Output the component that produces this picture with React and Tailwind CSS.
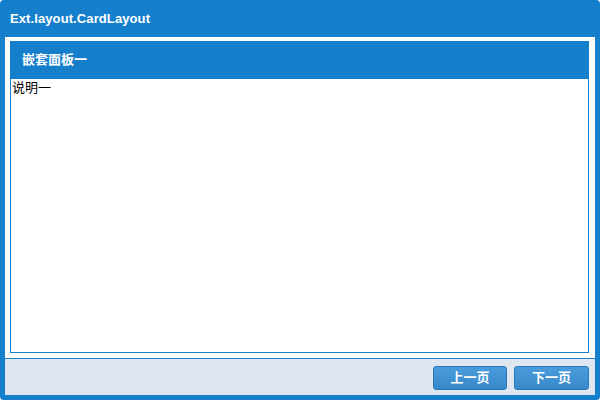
export default function App() {
  const font = { fontFamily: '"Liberation Sans", "Noto Sans CJK SC", sans-serif' };
  return (
    <div className="w-[601px] h-[401px] bg-white" style={font}>
      <div className="w-[600px] h-[400px] bg-[#157fcc] rounded-[4px] flex flex-col px-[5px] pb-[5px]">
        <div className="h-[37px] flex items-center pl-[5px] text-white font-bold text-[13px] tracking-[0.1px] shrink-0">
          Ext.layout.CardLayout
        </div>
        <div className="flex-1 bg-white flex flex-col pt-[4px] pl-[5px] pr-[6px] pb-[5px] min-h-0">
          <div className="flex-1 flex flex-col min-h-0">
            <div className="h-[38px] bg-[#157fcc] flex items-center pl-[12px] text-white font-bold text-[13px] shrink-0">
              嵌套面板一
            </div>
            <div className="flex-1 border border-t-0 border-[#157fcc] bg-white text-black text-[13px] leading-[16px] pl-[1px] pt-[1px]">
              说明一
            </div>
          </div>
        </div>
        <div className="h-[37px] shrink-0 bg-[#dfe8f1] border-t border-[#157fcc] flex items-center justify-end gap-[7px] pr-[6px] pt-[1px]">
          <button className="w-[74px] h-[24px] rounded-[3px] border border-[#2a78b8] bg-gradient-to-b from-[#4a9cdb] to-[#3688ca] text-white text-[13px] font-semibold">
            上一页
          </button>
          <button className="w-[75px] h-[24px] rounded-[3px] border border-[#2a78b8] bg-gradient-to-b from-[#4a9cdb] to-[#3688ca] text-white text-[13px] font-semibold">
            下一页
          </button>
        </div>
      </div>
    </div>
  );
}
